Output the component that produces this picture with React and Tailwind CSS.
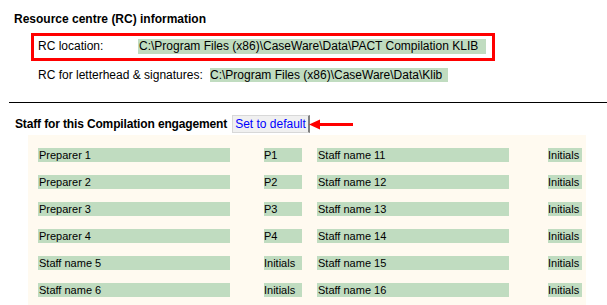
import React from "react";

const left = [
  ["Preparer 1", "P1"],
  ["Preparer 2", "P2"],
  ["Preparer 3", "P3"],
  ["Preparer 4", "P4"],
  ["Staff name 5", "Initials"],
  ["Staff name 6", "Initials"],
];
const right = [
  "Staff name 11",
  "Staff name 12",
  "Staff name 13",
  "Staff name 14",
  "Staff name 15",
  "Staff name 16",
];

export default function App() {
  return (
    <div className="w-[607px] h-[305px] overflow-hidden bg-white text-black font-['Liberation_Sans',Arial,sans-serif] flex flex-col">
      <div className="pt-[12px] pl-[14px] h-[26px] text-[12px] leading-[14px] font-bold">
        Resource centre (RC) information
      </div>
      <div className="mt-[7px] ml-[31px] w-[464px] h-[28px] border-[3px] border-[#ff0000] pl-[4px] pt-[3px]">
        <div className="flex text-[12px] leading-[15px] h-[15px]">
          <div className="w-[100px]">RC location:</div>
          <div className="w-[348px] bg-[#c0dcc0] pl-[1px] whitespace-nowrap">
            C:\Program Files (x86)\CaseWare\Data\PACT Compilation KLIB
          </div>
        </div>
      </div>
      <div className="mt-[7px] ml-[38px] flex text-[12px] leading-[14px] h-[14px]">
        <div className="w-[172px] whitespace-nowrap">RC for letterhead &amp; signatures:</div>
        <div className="w-[238px] bg-[#c0dcc0] whitespace-nowrap">
          C:\Program Files (x86)\CaseWare\Data\Klib
        </div>
      </div>
      <div className="mt-[20px] ml-[9px] h-px bg-black" />
      <div className="mt-[12px] ml-[15px] flex items-center h-[18px]">
        <div className="w-[217px] text-[12px] leading-[14px] font-bold tracking-[-0.14px] whitespace-nowrap">
          Staff for this Compilation engagement
        </div>
        <button className="w-[78px] h-[18px] bg-[#f0f0f0] border border-[#d8d8d8] border-r-2 border-r-[#808080] text-[12px] leading-[14px] text-[#0000ff] text-center whitespace-nowrap">
          Set to default
        </button>
        <svg width="45" height="13" viewBox="0 0 45 13" className="-ml-[1px]">
          <line x1="9" y1="6.5" x2="44" y2="6.5" stroke="#ff0000" strokeWidth="3" />
          <polygon points="0,6.5 11,1.5 11,11.5" fill="#ff0000" />
        </svg>
      </div>
      <div className="mt-[2px] ml-[28px] w-[558px] flex-1 bg-[#fffaf0] pt-[13px] pl-[10px] flex flex-col gap-[13px]">
        {left.map((l, i) => (
          <div key={i} className="flex h-[14px] text-[11px] leading-[14px] whitespace-nowrap">
            <div className="w-[192px] bg-[#c0dcc0] pl-[1px]">{l[0]}</div>
            <div className="ml-[34px] w-[38px] bg-[#c0dcc0]">{l[1]}</div>
            <div className="ml-[15px] w-[192px] bg-[#c0dcc0] pl-[1px]">{right[i]}</div>
            <div className="ml-[39px] w-[34px] bg-[#c0dcc0]">Initials</div>
          </div>
        ))}
      </div>
    </div>
  );
}
